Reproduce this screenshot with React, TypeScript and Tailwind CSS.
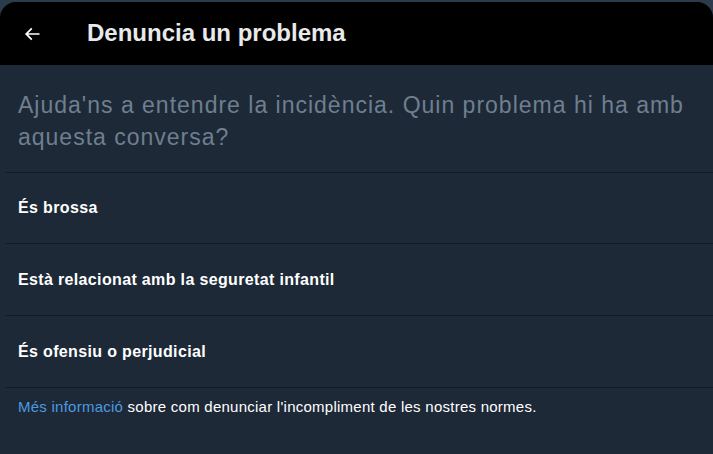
import React from 'react';

const options = ['És brossa', 'Està relacionat amb la seguretat infantil', 'És ofensiu o perjudicial'];

const App: React.FC = () => {
  return (
    <div className="w-[713px] h-[454px] overflow-hidden bg-[#2b3b4c] pt-[2px]" style={{ fontFamily: '"Liberation Sans", Arial, sans-serif' }}>
      <div className="h-full bg-[#1d2937] rounded-t-[16px] overflow-hidden">
        <div className="h-[63px] bg-black flex items-center">
          <button className="w-[64px] h-full flex items-center justify-center text-white">
            <svg className="w-[20px] h-[20px]" viewBox="0 0 24 24" fill="currentColor">
              <path d="M7.414 13l5.043 5.04-1.414 1.42L3.586 12l7.457-7.46 1.414 1.42L7.414 11H21v2H7.414z" />
            </svg>
          </button>
          <h1 className="ml-[23px] -mt-[2px] text-[24px] font-bold text-[#e7e9ea]">Denuncia un problema</h1>
        </div>
        <div className="px-[18px] pt-[24px] pb-[19px] text-[23px] leading-[32px] tracking-[1px] text-[#6f7f8f]">
          Ajuda'ns a entendre la incidència. Quin problema hi ha amb aquesta conversa?
        </div>
        <div className="ml-[5px]">
          {options.map((o, i) => (
            <div key={o} className={`${i === 0 ? 'h-[71px]' : 'h-[72px]'} border-t border-[#141d27] flex items-center pl-[13px] text-[16px] tracking-[0.35px] font-bold text-white`}>
              {o}
            </div>
          ))}
          <div className="border-t border-[#141d27] pl-[13px] pt-[8px] text-[15px] tracking-[0.25px] text-white">
            <a className="text-[#4c9be0]">Més informació</a> sobre com denunciar l'incompliment de les nostres normes.
          </div>
        </div>
      </div>
    </div>
  );
};

export default App;
